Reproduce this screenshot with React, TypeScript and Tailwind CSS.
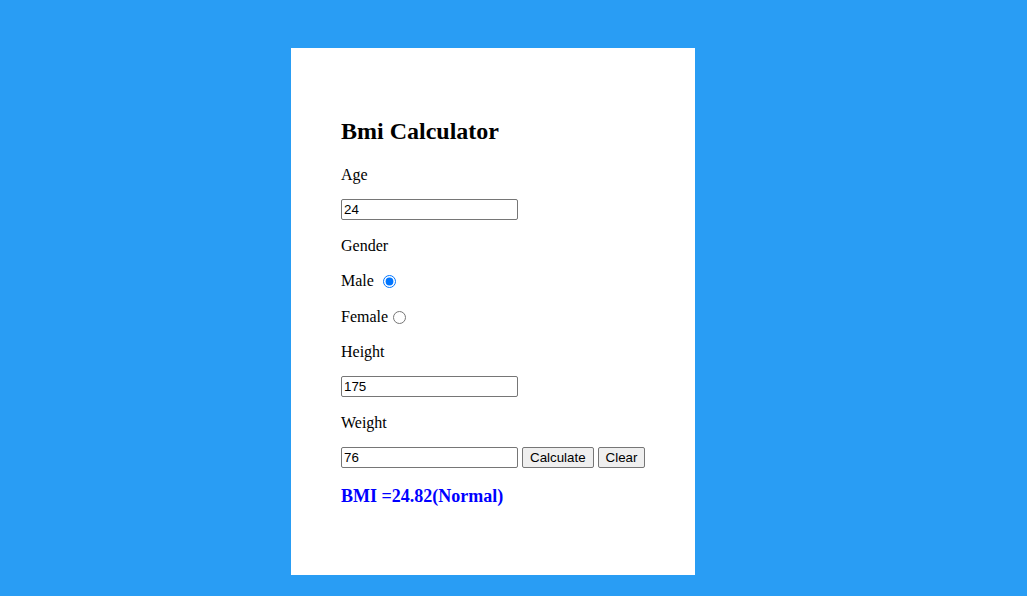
import React, { useState } from "react";

export default function App() {
  const [age, setAge] = useState("24");
  const [gender, setGender] = useState("male");
  const [height, setHeight] = useState("175");
  const [weight, setWeight] = useState("76");
  const [result, setResult] = useState("BMI =24.82(Normal)");

  const calculate = () => {
    const h = parseFloat(height) / 100;
    const w = parseFloat(weight);
    if (!h || !w) return;
    const bmi = w / (h * h);
    let label = "Normal";
    if (bmi < 18.5) label = "Underweight";
    else if (bmi >= 25 && bmi < 30) label = "Overweight";
    else if (bmi >= 30) label = "Obese";
    setResult(`BMI =${bmi.toFixed(2)}(${label})`);
  };

  const clear = () => {
    setAge("");
    setHeight("");
    setWeight("");
    setResult("");
  };

  const inputCls =
    "block w-[177px] h-[21px] border border-[#767676] rounded-[2px] bg-white px-[2px] text-[13.33px] leading-[15px] text-black font-['Liberation_Sans',Arial,sans-serif] outline-none";
  const btnCls =
    "h-[21px] border border-[#767676] rounded-[2px] bg-[#efefef] px-[7px] text-[13.33px] leading-[15px] text-black font-['Liberation_Sans',Arial,sans-serif]";
  const label = "h-[18px] leading-[18px] text-[16px]";

  return (
    <div className="min-h-screen bg-[#299df4] pt-[48px] pl-[291px] font-['Liberation_Serif','Times_New_Roman',serif] text-black">
      <div className="w-[404px] h-[527px] bg-white px-[50px] pt-[69px]">
        <h2 className="h-[28px] leading-[28px] text-[24px] font-bold">Bmi Calculator</h2>

        <p className={`mt-[21px] ${label}`}>Age</p>
        <input
          className={`mt-[15px] ${inputCls}`}
          value={age}
          onChange={(e) => setAge(e.target.value)}
        />

        <p className={`mt-[17px] ${label}`}>Gender</p>
        <div className={`mt-[17px] flex items-center ${label}`}>
          <span>Male</span>
          <input
            type="radio"
            name="gender"
            className="ml-[9px] w-[13px] h-[13px]"
            checked={gender === "male"}
            onChange={() => setGender("male")}
          />
        </div>
        <div className={`mt-[18px] flex items-center ${label}`}>
          <span>Female</span>
          <input
            type="radio"
            name="gender"
            className="ml-[5px] w-[13px] h-[13px]"
            checked={gender === "female"}
            onChange={() => setGender("female")}
          />
        </div>

        <p className={`mt-[17px] ${label}`}>Height</p>
        <input
          className={`mt-[15px] ${inputCls}`}
          value={height}
          onChange={(e) => setHeight(e.target.value)}
        />

        <p className={`mt-[17px] ${label}`}>Weight</p>
        <div className="mt-[15px] flex items-center gap-[4px]">
          <input
            className={inputCls}
            value={weight}
            onChange={(e) => setWeight(e.target.value)}
          />
          <button className={btnCls} onClick={calculate}>
            Calculate
          </button>
          <button className={btnCls} onClick={clear}>
            Clear
          </button>
        </div>

        <h3 className="mt-[17px] h-[22px] leading-[22px] text-[18px] font-bold text-[#0000ff]">{result}</h3>
      </div>
    </div>
  );
}
